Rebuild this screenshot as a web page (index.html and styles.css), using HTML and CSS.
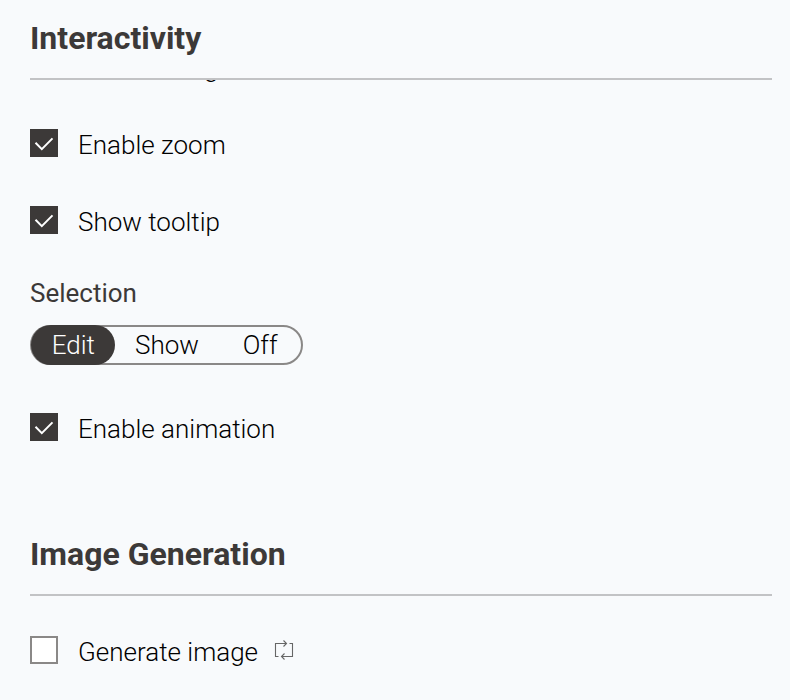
FILE: index.html
```html
<!DOCTYPE html>
<html lang="en">
<head>
<meta charset="utf-8">
<title>Settings</title>
<link rel="stylesheet" href="styles.css">
</head>
<body>
<main class="panel">
  <h2 class="heading">Interactivity</h2>
  <div class="clip"><span class="tail">g</span></div>
  <div class="row zoom"><span class="box on"><svg viewBox="0 0 28 28"><path d="M5.500 13.800l6.300 6.300L22.500 9.400"/></svg></span><span class="label">Enable zoom</span></div>
  <div class="row tooltip"><span class="box on"><svg viewBox="0 0 28 28"><path d="M5.500 13.800l6.300 6.300L22.500 9.400"/></svg></span><span class="label">Show tooltip</span></div>
  <div class="caption">Selection</div>
  <div class="segments"><span class="seg edit">Edit</span><span class="seg show">Show</span><span class="seg off">Off</span></div>
  <div class="row animation"><span class="box on"><svg viewBox="0 0 28 28"><path d="M5.500 13.800l6.300 6.300L22.500 9.400"/></svg></span><span class="label">Enable animation</span></div>
  <h2 class="heading second">Image Generation</h2>
  <div class="row generate"><span class="box"></span><span class="label">Generate image</span>
    <svg class="cycle" viewBox="0 0 22 22"><path d="M5.500 17.500H2.500V4.500H13.500M10.500 1.500l3 3-3 3M16.500 4.500H19.500V17.500H8.500M11.500 14.500l-3 3 3 3"/></svg></div>
</main>
</body>
</html>
```
FILE: styles.css
```css
body { margin: 0; background: #f8fafc; font-family: Roboto, sans-serif; font-weight: 300; color: #000; }
.panel { height: 700px; padding: 0 18px 0 30px; box-sizing: border-box; overflow: hidden; }
.heading { margin: 0; height: 80px; box-sizing: border-box; padding-top: 18px; border-bottom: 2px solid #c2c3c5; color: #3c3938; font-size: 32px; line-height: 40px; font-weight: 700; }
.clip { height: 3px; overflow: hidden; display: flex; align-items: flex-end; padding-left: 174px; font-size: 26px; }
.tail { line-height: 30px; }
.row { display: flex; align-items: center; height: 32px; }
.zoom { margin-top: 44px; }
.tooltip { margin-top: 45px; }
.box { width: 28px; height: 28px; box-sizing: border-box; border: 2px solid #8a8887; background: #fff; margin-right: 20px; }
.on { border: 0; background: #3c3938; }
.box svg { display: block; fill: none; stroke: #fff; stroke-width: 2; }
.label { padding-top: 4px; font-size: 26px; line-height: 32px; }
.caption { margin-top: 41px; color: #3c3938; font-size: 26px; line-height: 32px; font-weight: 400; }
.segments { display: flex; margin-top: 16px; width: 273px; height: 40px; box-sizing: border-box; border: 2px solid #8a8887; border-radius: 20px; font-size: 26px; line-height: 36px; }
.seg { text-align: center; }
.edit { width: 84px; height: 40px; box-sizing: border-box; padding-left: 1px; margin: -2px 0 0 -1px; line-height: 40px; background: #3c3938; color: #fff; border-radius: 20px; }
.show { width: 105px; }
.off { width: 82px; }
.animation { margin-top: 46px; }
.second { margin-top: 73px; }
.generate { margin-top: 38px; }
.cycle { width: 22px; height: 22px; margin-left: 15px; fill: none; stroke: #666; stroke-width: 1.1; }
```
